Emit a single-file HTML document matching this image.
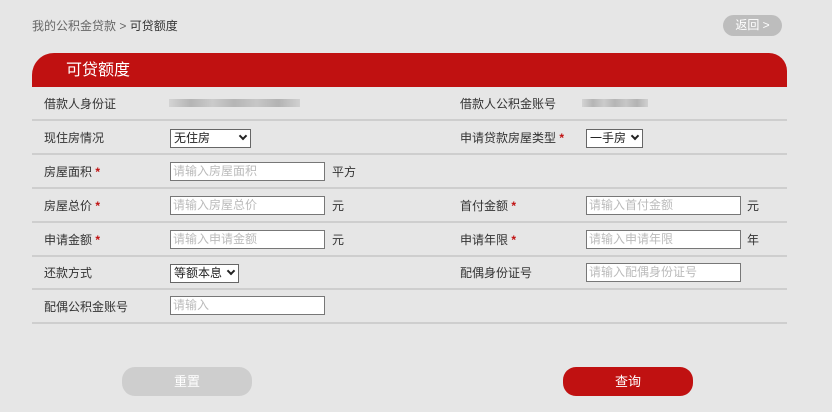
<!DOCTYPE html>
<html><head><meta charset="utf-8"><style>
*{margin:0;padding:0;box-sizing:border-box}
body{width:832px;height:412px;background:#e6e6e6;font-family:"Liberation Sans","Noto Sans CJK SC",sans-serif;font-size:12px;color:#333;position:relative;overflow:hidden}
.a{position:absolute;white-space:nowrap}
.crumb{left:32px;top:17px;color:#666}
.crumb b{font-weight:normal;color:#333}
.back{left:723px;top:15px;width:59px;height:21px;border-radius:11px;background:#bdbdbd;color:#fff;line-height:21px;text-align:center}
.head{left:32px;top:53px;width:755px;height:34px;background:#c01111;border-radius:22px 18px 0 0;color:#fff;font-size:16px;line-height:36px;padding-left:34px}
.line{left:32px;width:755px;height:2px;background:#cecece}
.lb{line-height:16px}
.s{color:#c01111;font-weight:bold}
.in{height:19px;background:#fff;border:1px solid #777;color:#bbb;font-size:12px;line-height:17px;padding-left:2px}
.sel{height:19px;background:#fff;border:1px solid #666;color:#222;line-height:17px;padding-left:3px}
.sel i{position:absolute;right:4px;top:3px;width:6px;height:6px;border-right:2px solid #222;border-bottom:2px solid #222;transform:rotate(45deg)}
.blur{height:8px;background:linear-gradient(90deg,#cfcfcf,#a8a8a8,#c4c4c4,#a9a9a9,#bfbfbf,#a6a6a6,#cbcbcb);opacity:.8}
.btn{top:367px;width:130px;height:29px;border-radius:13px;color:#fff;font-size:13px;line-height:29px;text-align:center}
</style></head><body>
<div class="a crumb">我的公积金贷款 &gt; <b>可贷额度</b></div>
<div class="a back">返回 &gt;</div>
<div class="a head">可贷额度</div>

<div class="a lb" style="left:44px;top:96px">借款人身份证</div>
<div class="a blur" style="left:169px;top:99px;width:131px"></div>
<div class="a lb" style="left:460px;top:96px">借款人公积金账号</div>
<div class="a blur" style="left:582px;top:99px;width:66px"></div>
<div class="a line" style="top:119px"></div>

<div class="a lb" style="left:44px;top:130px">现住房情况</div>
<div class="a sel" style="left:170px;top:129px;width:81px">无住房<i></i></div>
<div class="a lb" style="left:460px;top:130px">申请贷款房屋类型 <span class="s">*</span></div>
<div class="a sel" style="left:586px;top:129px;width:57px">一手房<i></i></div>
<div class="a line" style="top:153px"></div>

<div class="a lb" style="left:44px;top:164px">房屋面积 <span class="s">*</span></div>
<div class="a in" style="left:170px;top:162px;width:155px">请输入房屋面积</div>
<div class="a lb" style="left:332px;top:164px">平方</div>
<div class="a line" style="top:187px"></div>

<div class="a lb" style="left:44px;top:198px">房屋总价 <span class="s">*</span></div>
<div class="a in" style="left:170px;top:196px;width:155px">请输入房屋总价</div>
<div class="a lb" style="left:332px;top:198px">元</div>
<div class="a lb" style="left:460px;top:198px">首付金额 <span class="s">*</span></div>
<div class="a in" style="left:586px;top:196px;width:155px">请输入首付金额</div>
<div class="a lb" style="left:747px;top:198px">元</div>
<div class="a line" style="top:221px"></div>

<div class="a lb" style="left:44px;top:232px">申请金额 <span class="s">*</span></div>
<div class="a in" style="left:170px;top:230px;width:155px">请输入申请金额</div>
<div class="a lb" style="left:332px;top:232px">元</div>
<div class="a lb" style="left:460px;top:232px">申请年限 <span class="s">*</span></div>
<div class="a in" style="left:586px;top:230px;width:155px">请输入申请年限</div>
<div class="a lb" style="left:747px;top:232px">年</div>
<div class="a line" style="top:255px"></div>

<div class="a lb" style="left:44px;top:265px">还款方式</div>
<div class="a sel" style="left:170px;top:264px;width:69px">等额本息<i></i></div>
<div class="a lb" style="left:460px;top:265px">配偶身份证号</div>
<div class="a in" style="left:586px;top:263px;width:155px">请输入配偶身份证号</div>
<div class="a line" style="top:288px"></div>

<div class="a lb" style="left:44px;top:299px">配偶公积金账号</div>
<div class="a in" style="left:170px;top:296px;width:155px">请输入</div>
<div class="a line" style="top:322px"></div>

<div class="a btn" style="left:122px;background:#cecece">重置</div>
<div class="a btn" style="left:563px;background:#c01111">查询</div>
</body></html>
